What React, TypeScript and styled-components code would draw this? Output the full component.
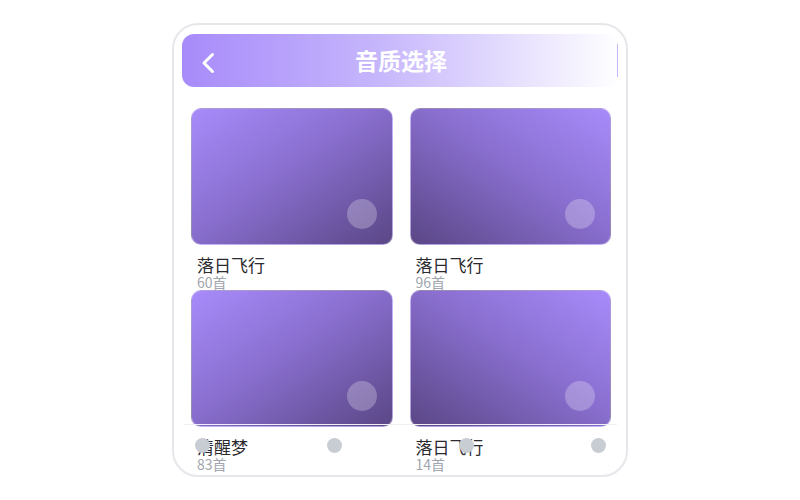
import styled, { createGlobalStyle } from 'styled-components';

const GlobalStyle = createGlobalStyle`
  html, body {
    margin: 0;
    padding: 0;
    background: #ffffff;
  }
  * {
    box-sizing: border-box;
  }
`;

type Album = {
  name: string;
  count: number;
};

const albums: Album[] = [
  { name: '落日飞行', count: 60 },
  { name: '落日飞行', count: 96 },
  { name: '清醒梦', count: 83 },
  { name: '落日飞行', count: 14 },
];

export default function App() {
  return (
    <>
      <GlobalStyle />
      <Page>
        <Phone>
          <Header>
            <BackButton aria-label="back">
              <svg width="14" height="22" viewBox="0 0 14 22" fill="none">
                <polyline
                  points="11.5,2.5 3,11 11.5,19.5"
                  stroke="#ffffff"
                  strokeWidth="3"
                  strokeLinecap="round"
                  strokeLinejoin="round"
                />
              </svg>
            </BackButton>
            <Title>音质选择</Title>
            <Divider />
          </Header>

          <Grid>
            {albums.map((album, i) => (
              <Item key={i}>
                <Cover $flip={i % 2 === 1}>
                  <PlayDot />
                </Cover>
                <Name>{album.name}</Name>
                <Count>{album.count}首</Count>
              </Item>
            ))}
          </Grid>

          <TabBar>
            <TabDot />
            <TabDot />
            <TabDot />
            <TabDot />
          </TabBar>
        </Phone>
      </Page>
    </>
  );
}

const Page = styled.div`
  width: 100vw;
  height: 100vh;
  display: flex;
  align-items: center;
  justify-content: center;
  font-family: "Noto Sans CJK SC", "Noto Sans", sans-serif;
`;

const Phone = styled.div`
  position: relative;
  width: 456px;
  height: 454px;
  border: 2px solid #e6e7eb;
  border-radius: 26px;
  padding: 9px 6px 0 8px;
  overflow: hidden;
  background: #ffffff;
`;

const Header = styled.div`
  height: 53px;
  border-radius: 12px;
  background: linear-gradient(90deg, #a78bfa 0%, #c6b6fc 45%, #ffffff 100%);
  display: grid;
  grid-template-columns: 60px 1fr 60px;
  align-items: center;
`;

const BackButton = styled.button`
  border: none;
  background: none;
  padding: 0;
  margin-left: 19px;
  margin-top: 4px;
  width: 14px;
  height: 22px;
  display: flex;
  cursor: pointer;
`;

const Title = styled.h1`
  margin: 0;
  text-align: center;
  color: #ffffff;
  font-size: 23px;
  font-weight: 700;
  line-height: 1;
`;

const Divider = styled.span`
  justify-self: end;
  margin-right: 2px;
  width: 1px;
  height: 33px;
  background: #c4b5fd;
`;

const Grid = styled.div`
  margin: 20px 9px 0 9px;
  display: grid;
  grid-template-columns: 1fr 1fr;
  column-gap: 17px;
`;

const Item = styled.div`
  display: flex;
  flex-direction: column;
  height: 182px;
  padding-top: 1px;
`;

const Cover = styled.div<{ $flip: boolean }>`
  position: relative;
  height: 139px;
  border-radius: 10px;
  border: 1px solid rgba(255, 255, 255, 0.35);
  background: ${({ $flip }) =>
    $flip
      ? 'linear-gradient(to bottom left, #a78bfa 0%, #8a6fd0 45%, #5a4786 100%)'
      : 'linear-gradient(to bottom right, #a78bfa 0%, #8a6fd0 45%, #5a4786 100%)'};
`;

const PlayDot = styled.span`
  position: absolute;
  right: 15px;
  bottom: 15px;
  width: 30px;
  height: 30px;
  border-radius: 50%;
  background: rgba(255, 255, 255, 0.25);
`;

const Name = styled.div`
  margin-top: 10px;
  padding-left: 6px;
  font-size: 17px;
  line-height: 20px;
  color: #2b2b2f;
`;

const Count = styled.div`
  padding-left: 6px;
  font-size: 14px;
  line-height: 14px;
  color: #a1a5ae;
`;

const TabBar = styled.div`
  position: absolute;
  left: 10px;
  right: 9px;
  bottom: 0;
  height: 51px;
  border-top: 1px solid #eef0f4;
  padding: 13px 11px 0 11px;
  display: flex;
  align-items: flex-start;
  justify-content: space-between;
`;

const TabDot = styled.span`
  width: 15px;
  height: 15px;
  border-radius: 50%;
  background: #c8ccd3;
`;
